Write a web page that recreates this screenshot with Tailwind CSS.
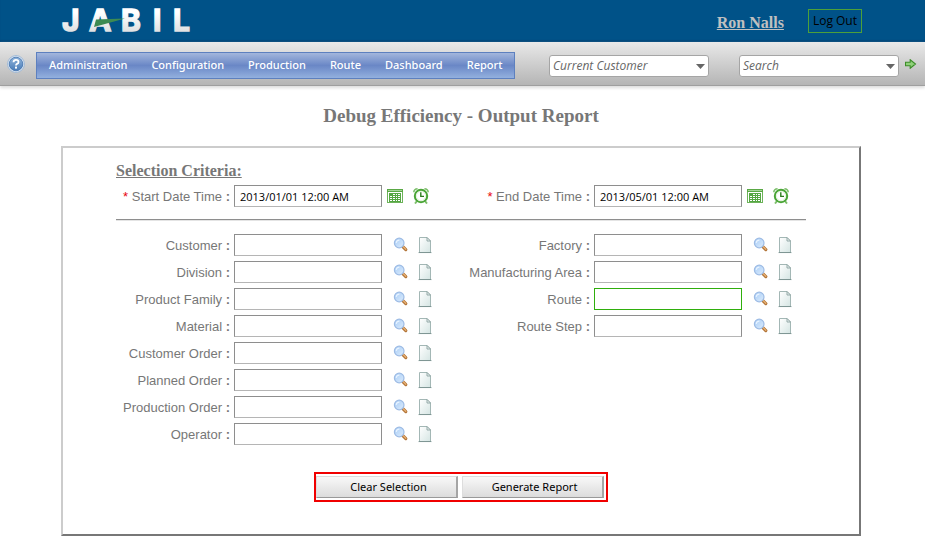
<!DOCTYPE html>
<html lang="en">
<head>
<meta charset="utf-8">
<meta name="viewport" content="width=device-width, initial-scale=1">
<title>Debug Efficiency - Output Report</title>
<script src="https://cdn.jsdelivr.net/npm/@tailwindcss/browser@4"></script>
</head>
<body class="bg-white font-['Open_Sans','Noto_Sans',sans-serif] text-[12px] text-black">

<svg class="absolute size-0" aria-hidden="true">
  <defs>
    <linearGradient id="silver" x1="0" y1="0" x2="0" y2="1"><stop offset="0.3" stop-color="#fff"/><stop offset="1" stop-color="#d4d6d8"/></linearGradient>
    <linearGradient id="help" x1="0" y1="0" x2="0" y2="1"><stop offset="0" stop-color="#8fb3da"/><stop offset="1" stop-color="#4a7cb8"/></linearGradient>
    <linearGradient id="lens" x1="0" y1="0" x2="1" y2="1"><stop offset="0" stop-color="#a9cdf6"/><stop offset="1" stop-color="#dcecfc"/></linearGradient>
    <linearGradient id="paper" x1="0" y1="0" x2="1" y2="1"><stop offset="0" stop-color="#fff"/><stop offset="1" stop-color="#d5e5e3"/></linearGradient>
  </defs>
  <symbol id="i-cal" viewBox="0 0 16 16">
    <rect x="0.5" y="1.5" width="15" height="13" fill="#fff" stroke="#6db35a"/>
    <rect x="0" y="1" width="16" height="3" fill="#5aa845"/><rect x="1" y="2" width="14" height="1" fill="#a5d698"/>
    <rect x="2" y="5" width="12" height="9" fill="#55a642"/>
    <path d="M6 6h2v1H6zM9 6h1v1H9zM11 6h2v1h-2zM3 8h2v1H3zM6 8h2v1H6zM9 8h1v1H9zM11 8h2v1h-2zM3 10h2v1H3zM6 10h2v1H6zM9 10h1v1H9zM11 10h2v1h-2zM3 12h2v1H3zM6 12h2v1H6zM9 12h1v1H9zM11 12h2v1h-2z" fill="#fff"/>
  </symbol>
  <symbol id="i-clock" viewBox="0 0 16 16">
    <path d="M0.8 4.2Q1 1 4.6 0.8M15.2 4.2Q15 1 11.4 0.8" fill="none" stroke="#7dbf6b" stroke-width="1.6"/>
    <path d="M4 13l-2 2.5M12 13l2 2.5" stroke="#7dbf6b" stroke-width="2"/>
    <circle cx="8" cy="8" r="6.2" fill="#fff" stroke="#4aa536" stroke-width="2"/>
    <circle cx="8" cy="8" r="4.6" fill="none" stroke="#d3ebca" stroke-width="0.6"/>
    <path d="M7.8 4.2V8.4H11" fill="none" stroke="#2a7c1b" stroke-width="1.4"/>
  </symbol>
  <symbol id="i-search" viewBox="0 0 16 16">
    <path d="M9.8 9.6l3 3" stroke="#b27438" stroke-width="3.2" stroke-linecap="round"/>
    <path d="M10.2 9.6l2.6 2.6" stroke="#e9b375" stroke-width="1.3" stroke-linecap="round"/>
    <circle cx="6.2" cy="6" r="4.8" fill="url(#lens)" stroke="#9dbbe4" stroke-width="1.2"/>
    <path d="M3.2 5.8Q3.6 3.2 6.4 3.1" fill="none" stroke="#e8f3ff" stroke-width="1.1"/>
  </symbol>
  <symbol id="i-doc" viewBox="0 0 16 18">
    <path d="M1 16.6h14" stroke="#c9d5d3" stroke-width="1"/>
    <path d="M2.5 1.5H10L13.5 5V16.5H2.5Z" fill="url(#paper)" stroke="#a3b7b5"/>
    <path d="M10 1.5V5H13.5Z" fill="#e9f1f0" stroke="#8ca3a1" stroke-width="0.9"/>
    <path d="M2 16.5h12" stroke="#7f9694"/>
  </symbol>
</svg>

<header class="flex h-[42px] items-center justify-between bg-[#005288] pl-[60px] pr-[63px] shadow-[inset_0_-2px_1px_#00477a]">
  <svg class="h-10 w-[140px]" viewBox="0 0 140 40" role="img" aria-label="Jabil">
    <text x="2 29 61 93 113" y="30" fill="url(#silver)" stroke="url(#silver)" stroke-width="1.4" class="font-['Inter'] text-[30px] font-bold">JABIL</text>
    <path d="M36 18.5L65 17.5L34 26Z" fill="#3d8a52"/>
  </svg>
  <div class="flex items-start gap-6">
    <a href="#" class="pt-1 font-['Liberation_Serif',serif] text-[16px] leading-5 font-bold text-[#c0c0c0] underline">Ron Nalls</a>
    <button type="button" class="h-6 border border-[#4da03a] px-1 leading-[22px]">Log Out</button>
  </div>
</header>

<div class="flex h-11 items-center border-b border-[#9f9f9f] bg-linear-to-b from-[#e9e9e9] to-[#b5b5b5] pr-2 pl-[7px] shadow-[0_2px_3px_#ddd]">
  <a href="#" aria-label="Help" class="mr-[11px]">
    <svg class="size-[18px]" viewBox="0 0 18 18">
      <circle cx="9" cy="9" r="8.4" fill="#e6eef7" stroke="#9db7d5" stroke-width="1"/>
      <circle cx="9" cy="9" r="6.8" fill="url(#help)" stroke="#3f70ac" stroke-width="0.8"/>
      <path d="M6.5 7.2Q6.6 4.8 9 4.8Q11.5 4.8 11.5 6.9Q11.5 8.2 10 8.9Q9 9.4 9 10.4" fill="none" stroke="#fff" stroke-width="1.8"/>
      <rect x="8" y="11.6" width="2" height="2" fill="#fff"/>
    </svg>
  </a>
  <nav class="mt-1 flex h-[27px] items-center border border-[#5d80bf] bg-linear-to-b from-[#a3b6dc] from-0% via-[#6a87c6] via-50% to-[#93b0de] font-['Noto_Sans',sans-serif] text-[11px] font-medium text-white">
    <a href="#" class="px-3">Administration</a>
    <a href="#" class="px-3">Configuration</a>
    <a href="#" class="px-3">Production</a>
    <a href="#" class="px-3">Route</a>
    <a href="#" class="px-3">Dashboard</a>
    <a href="#" class="px-3">Report</a>
  </nav>
  <div class="mt-1 ml-auto flex items-center">
    <div class="relative mr-[30px]">
      <select aria-label="Current Customer" class="h-[22px] w-40 appearance-none rounded-[3px] border border-[#a5a5a5] bg-white pl-[3px] text-[#666] italic"><option>Current Customer</option></select>
      <svg class="pointer-events-none absolute top-[9px] right-1 h-[5px] w-[9px]" viewBox="0 0 9 5"><path d="M0 0H9L4.5 5Z" fill="#666"/></svg>
    </div>
    <div class="relative mr-[6px]">
      <select aria-label="Search" class="h-[22px] w-40 appearance-none rounded-[3px] border border-[#a5a5a5] bg-white pl-[3px] text-[#666] italic"><option>Search</option></select>
      <svg class="pointer-events-none absolute top-[9px] right-1 h-[5px] w-[9px]" viewBox="0 0 9 5"><path d="M0 0H9L4.5 5Z" fill="#666"/></svg>
    </div>
    <button type="button" aria-label="Go" class="-mt-1">
      <svg class="h-[10px] w-3" viewBox="0 0 12 10"><path d="M0.5 3.2H5.2V0.7L10.5 5L5.2 9.3V6.8H0.5Z" fill="#8fd07a" stroke="#3c8c28" stroke-width="1.1"/></svg>
    </button>
  </div>
</div>

<main class="pr-[3px]">
  <h1 class="pt-[18px] text-center font-['Liberation_Serif',serif] text-[19px] leading-6 font-bold text-[#777]">Debug Efficiency - Output Report</h1>
  <form class="mx-auto mt-[18px] w-full max-w-[800px] border-2 border-t-[#ccc] border-r-[#777] border-b-[#777] border-l-[#ccc] px-[53px] pt-[13px] pb-8">
    <h2 class="font-['Liberation_Serif',serif] text-[16px] leading-5 font-bold text-[#777] underline">Selection Criteria:</h2>

    <div class="mt-1 grid grid-cols-[348px_1fr]">
      <div class="flex items-center">
        <label for="start" class="w-[114px] pt-px text-right font-['Liberation_Sans',sans-serif] text-[13px] whitespace-nowrap text-[#777]"><span class="text-red-600">*</span> Start Date Time <b>:</b></label>
        <input id="start" value="2013/01/01 12:00 AM" class="mr-[5px] ml-1 h-[22px] w-[148px] border border-[#8e8e8e] border-b-[#b5b5b5] px-[5px] text-[11px]">
        <button type="button" aria-label="Pick start date" class="mr-[10px]"><svg class="size-4"><use href="#i-cal"/></svg></button>
        <button type="button" aria-label="Pick start time"><svg class="size-4"><use href="#i-clock"/></svg></button>
      </div>
      <div class="flex items-center">
        <label for="end" class="w-[126px] pt-px text-right font-['Liberation_Sans',sans-serif] text-[13px] whitespace-nowrap text-[#777]"><span class="text-red-600">*</span> End Date Time <b>:</b></label>
        <input id="end" value="2013/05/01 12:00 AM" class="mr-[5px] ml-1 h-[22px] w-[148px] border border-[#8e8e8e] border-b-[#b5b5b5] px-[5px] text-[11px]">
        <button type="button" aria-label="Pick end date" class="mr-[10px]"><svg class="size-4"><use href="#i-cal"/></svg></button>
        <button type="button" aria-label="Pick end time"><svg class="size-4"><use href="#i-clock"/></svg></button>
      </div>
    </div>

    <hr class="mt-3 mb-[13px] h-[2px] border-t border-b border-t-[#8e8e8e] border-b-[#e4e4e4]">

    <div class="grid grid-cols-[348px_1fr]">
      <div id="left" class="flex flex-col gap-[5px]"></div>
      <div id="right" class="flex flex-col gap-[5px]"></div>
    </div>

    <div class="mx-auto mt-[27px] flex w-fit gap-1 border-2 border-[#f00000] py-[2px] pr-[2px]">
      <button type="reset" class="h-[22px] w-[142px] border border-t-[#ddd] border-r-2 border-r-[#a5a5a5] border-b-[#999] border-l-[#ddd] bg-linear-to-b from-[#f8f8f8] to-[#dcdcdc] pt-px pl-1 font-['Noto_Sans',sans-serif] text-[11px]">Clear Selection</button>
      <button type="submit" class="h-[22px] w-[142px] border border-t-[#ddd] border-r-2 border-r-[#a5a5a5] border-b-[#999] border-l-[#ddd] bg-linear-to-b from-[#f8f8f8] to-[#dcdcdc] pt-px pl-1 font-['Noto_Sans',sans-serif] text-[11px]">Generate Report</button>
    </div>
  </form>
</main>

<script>
  const field = (name, labelWidth, border) => {
    const id = name.toLowerCase().replace(/ /g, '-');
    return `<div class="flex items-center">
      <label for="${id}" class="${labelWidth} pt-px text-right font-['Liberation_Sans',sans-serif] text-[13px] whitespace-nowrap text-[#777]">${name} <b>:</b></label>
      <input id="${id}" class="mr-[11px] ml-1 h-[22px] w-[148px] border ${border} px-[5px] text-[11px]">
      <button type="button" aria-label="Look up ${name}" class="mr-2"><svg class="size-4"><use href="#i-search"/></svg></button>
      <button type="button" aria-label="New ${name} list"><svg class="h-[18px] w-4"><use href="#i-doc"/></svg></button>
    </div>`;
  };
  const plain = 'border-[#8e8e8e] border-b-[#b5b5b5]';
  document.getElementById('left').innerHTML =
    ['Customer', 'Division', 'Product Family', 'Material', 'Customer Order', 'Planned Order', 'Production Order', 'Operator']
      .map(n => field(n, 'w-[114px]', plain)).join('');
  document.getElementById('right').innerHTML =
    ['Factory', 'Manufacturing Area', 'Route', 'Route Step']
      .map(n => field(n, 'w-[126px]', n === 'Route' ? 'border-[#2fae0c]' : plain)).join('');
</script>
</body>
</html>
